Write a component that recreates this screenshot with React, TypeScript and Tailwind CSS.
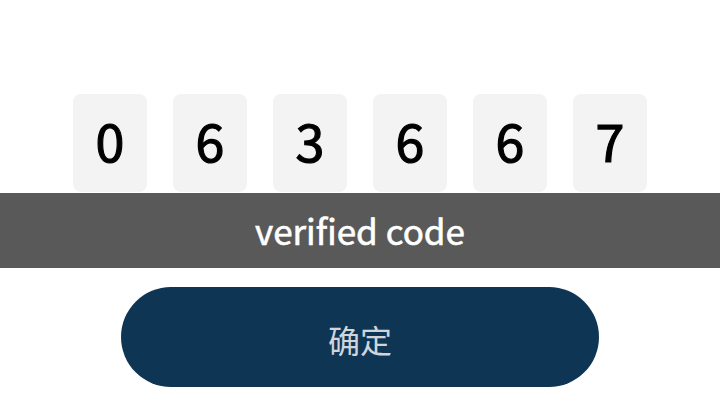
const CODE = ["0", "6", "3", "6", "6", "7"];

function DigitBox({ value }: { value: string }) {
  return (
    <div className="flex h-[98px] w-[74px] items-center justify-center rounded-[8px] bg-[#f3f3f3] pb-[6px] text-[52px] font-normal leading-none text-black [-webkit-text-stroke:1.2px_#000]">
      {value}
    </div>
  );
}

export default function App() {
  return (
    <div
      className="flex h-[404px] w-[720px] flex-col items-center bg-white pt-[94px]"
      style={{ fontFamily: '"Noto Sans CJK SC", "Noto Sans", sans-serif' }}
    >
      <div className="flex gap-[26px]">
        {CODE.map((d, i) => (
          <DigitBox key={i} value={d} />
        ))}
      </div>
      <div className="mt-px flex h-[75px] w-full items-center justify-center bg-[#595959] text-[35px] font-normal text-white [-webkit-text-stroke:0.6px_#fff]">
        verified code
      </div>
      <button className="mt-[19px] flex h-[100px] w-[478px] items-center justify-center rounded-full bg-[#0f3554] pt-[4px] text-[32px] font-normal text-[#d0d5db]">
        确定
      </button>
    </div>
  );
}
